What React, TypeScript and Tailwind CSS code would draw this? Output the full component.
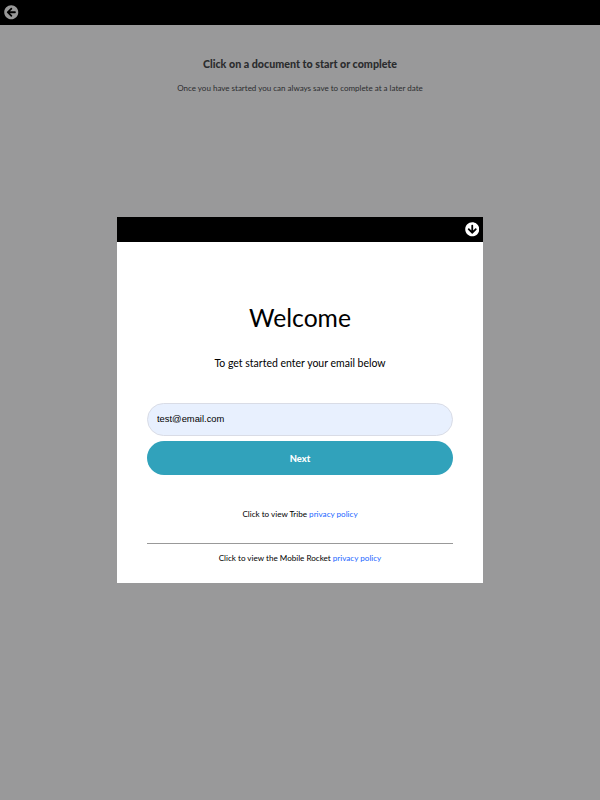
import { FaArrowCircleDown, FaArrowCircleLeft } from "react-icons/fa";

export default function App() {
  return (
    <div className="relative h-[800px] w-[600px] overflow-hidden bg-[#99999a] font-['Lato',sans-serif]">
      <header className="flex h-[25px] items-start bg-black pt-[5px] pl-[4px] text-[#999999]">
        <FaArrowCircleLeft size={14.5} />
      </header>
      <main className="pt-[31px] text-center text-[#2b2c2e]">
        <h1 className="text-[10.7px] leading-4 font-black">Click on a document to start or complete</h1>
        <p className="mt-2 text-[8px] leading-4">Once you have started you can always save to complete at a later date</p>
      </main>

      <div className="absolute inset-0 flex items-center justify-center">
        <section role="dialog" className="flex h-[366px] w-[366px] flex-col bg-white text-center text-black">
          <div className="flex h-[25px] items-start justify-end bg-black pt-[5px] pr-[4px] text-white">
            <FaArrowCircleDown size={14.5} />
          </div>
          <div className="flex flex-col px-[30px]">
            <h2 className="mt-[60px] text-[24.7px] leading-8">Welcome</h2>
            <p className="mt-[21px] text-[10.5px] leading-4">To get started enter your email below</p>
            <input
              type="email"
              defaultValue="test@email.com"
              className="mt-8 h-[33px] rounded-full border border-[#d9dce6] bg-[#e8f0fe] px-[9px] pb-0.5 font-['Liberation_Sans',sans-serif] text-[9.4px] outline-none"
            />
            <button className="mt-[5px] h-[34px] rounded-full bg-[#31a2bb] pt-px text-[9.3px] font-black text-white">Next</button>
            <p className="mt-[31px] text-[8.1px] leading-4">
              Click to view Tribe <a className="text-[#1a66ff]">privacy policy</a>
            </p>
            <hr className="mt-[21px] border-[#999999]" />
            <p className="mt-[6px] text-[8.1px] leading-4">
              Click to view the Mobile Rocket <a className="text-[#1a66ff]">privacy policy</a>
            </p>
          </div>
        </section>
      </div>
    </div>
  );
}
